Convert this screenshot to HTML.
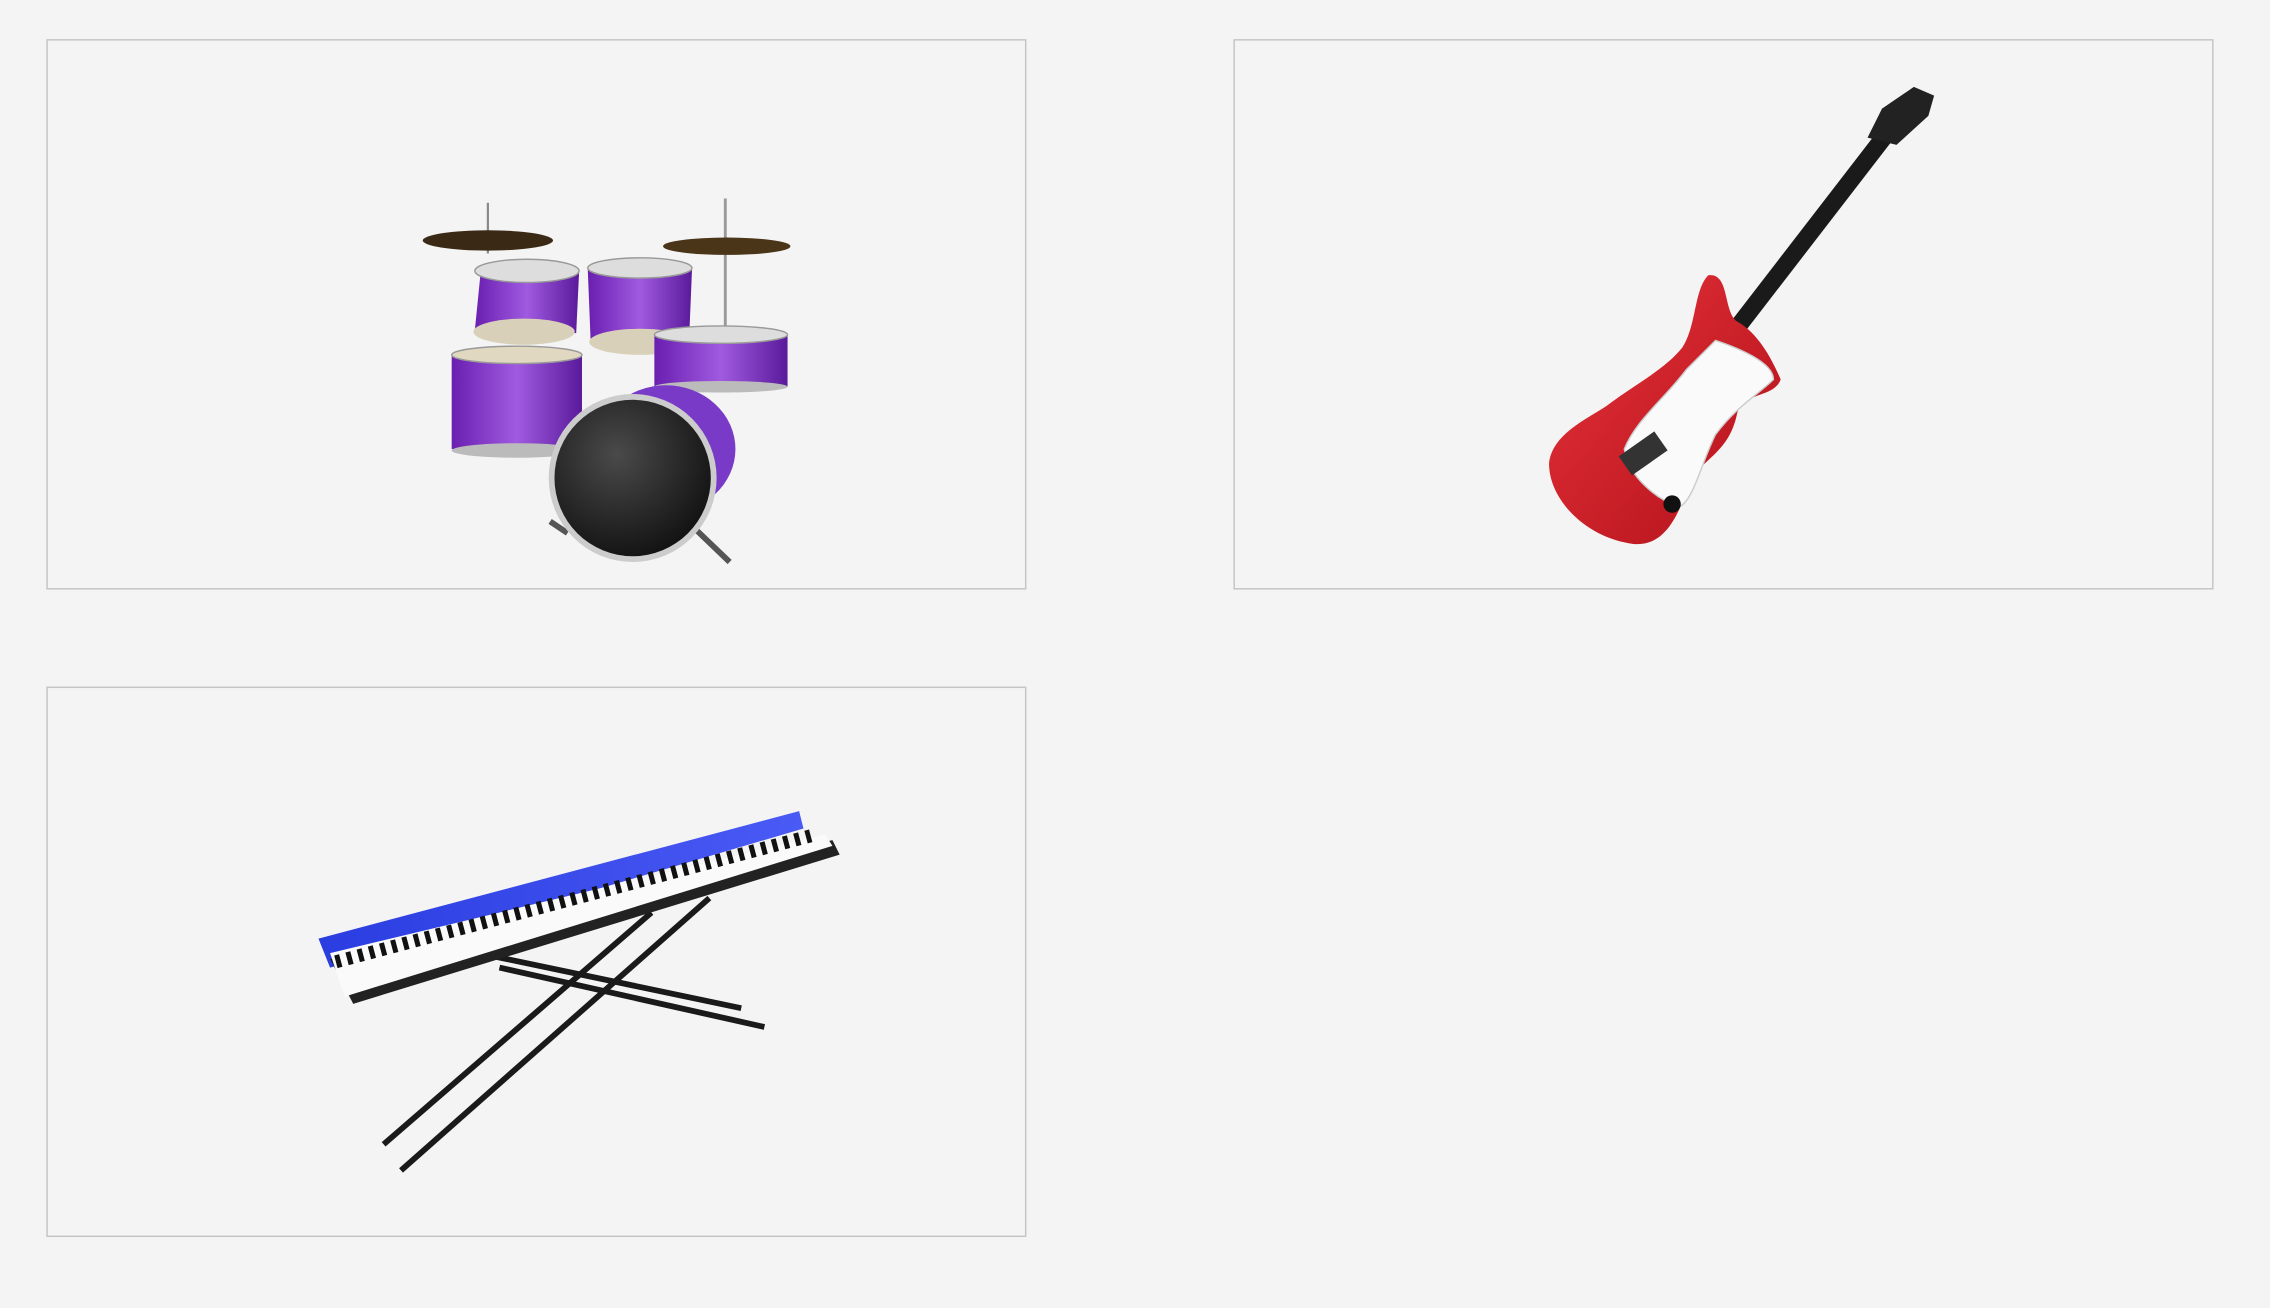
<!DOCTYPE html>
<html><head><meta charset="utf-8"><style>
html,body{margin:0;padding:0;background:#f4f4f4;}
svg{display:block;}
</style></head><body>
<svg width="2270" height="1308" viewBox="0 0 1568 903" preserveAspectRatio="none" xmlns="http://www.w3.org/2000/svg">
<defs>
<linearGradient id="pur" x1="0" x2="1"><stop offset="0" stop-color="#6a1fb0"/><stop offset="0.5" stop-color="#a05ae0"/><stop offset="1" stop-color="#5a1a9a"/></linearGradient>
<radialGradient id="bass" cx="0.4" cy="0.35" r="0.7"><stop offset="0" stop-color="#4a4a4a"/><stop offset="1" stop-color="#111"/></radialGradient>
<linearGradient id="red" x1="0" y1="0" x2="1" y2="1"><stop offset="0" stop-color="#e8333a"/><stop offset="1" stop-color="#b0101a"/></linearGradient>
<linearGradient id="blue" x1="0" x2="1"><stop offset="0" stop-color="#2a3de0"/><stop offset="1" stop-color="#4a5af5"/></linearGradient>
</defs>
<rect width="1568" height="903" fill="#f4f4f4"/>
<rect x="32.5" y="27.5" width="676" height="379" fill="#f4f4f4" stroke="#c4c4c4"/>
<rect x="852.5" y="27.5" width="676" height="379" fill="#f4f4f4" stroke="#c4c4c4"/>
<rect x="32.5" y="474.5" width="676" height="379" fill="#f4f4f4" stroke="#c4c4c4"/>

<!-- drums -->
<g>
<line x1="337" y1="140" x2="337" y2="175" stroke="#888" stroke-width="1.5"/>
<line x1="501" y1="137" x2="501" y2="230" stroke="#999" stroke-width="2"/>
<ellipse cx="337" cy="166" rx="45" ry="7" fill="#3a2a15"/>
<ellipse cx="502" cy="170" rx="44" ry="6" fill="#4a3518"/>
<line x1="380" y1="360" x2="392" y2="368" stroke="#555" stroke-width="4"/>
<line x1="480" y1="365" x2="504" y2="388" stroke="#555" stroke-width="4"/>
<path d="M332 188 L400 188 L398 230 L328 228 Z" fill="url(#pur)"/>
<ellipse cx="364" cy="187" rx="36" ry="8" fill="#ddd" stroke="#999"/>
<ellipse cx="362" cy="229" rx="35" ry="9" fill="#d8d0b8"/>
<path d="M406 186 L478 186 L476 234 L408 236 Z" fill="url(#pur)"/>
<ellipse cx="442" cy="185" rx="36" ry="7" fill="#ddd" stroke="#999"/>
<ellipse cx="442" cy="236" rx="35" ry="9" fill="#d8d0b8"/>
<rect x="452" y="231" width="92" height="36" fill="url(#pur)"/>
<ellipse cx="498" cy="231" rx="46" ry="6" fill="#ddd" stroke="#999"/>
<ellipse cx="498" cy="267" rx="46" ry="4" fill="#bbb"/>
<rect x="312" y="246" width="90" height="64" fill="url(#pur)"/>
<ellipse cx="357" cy="245" rx="45" ry="6" fill="#e0d8c0" stroke="#999"/>
<ellipse cx="357" cy="311" rx="45" ry="5" fill="#bbb"/>
<ellipse cx="460" cy="310" rx="48" ry="44" fill="#7a3ac8"/>
<circle cx="437" cy="330" r="58" fill="#ccc"/>
<circle cx="437" cy="330" r="54" fill="url(#bass)"/>
</g>

<!-- guitar -->
<g>
<line x1="1180" y1="252" x2="1305" y2="90" stroke="#1a1a1a" stroke-width="12" stroke-linecap="round"/>
<path d="M1290 95 L1300 75 L1322 60 L1336 66 L1332 80 L1310 100 Z" fill="#222"/>
<path d="M1180 190 C1195 188 1190 215 1200 222 C1215 230 1225 250 1230 262 C1225 275 1205 270 1200 285 C1195 310 1180 315 1168 330 C1160 355 1150 380 1125 375 C1095 370 1070 345 1070 320 C1072 300 1095 290 1110 280 C1130 265 1150 255 1162 240 C1172 225 1170 200 1180 190 Z" fill="url(#red)"/>
<path d="M1185 235 C1200 240 1225 250 1225 262 C1215 272 1200 280 1185 300 C1175 320 1170 345 1160 350 C1145 345 1125 330 1122 310 C1130 290 1150 275 1165 255 Z" fill="#fafafa" stroke="#ccc"/>
<rect x="1120" y="305" width="30" height="16" fill="#333" transform="rotate(-35 1135 313)"/>
<circle cx="1155" cy="348" r="6" fill="#111"/>
</g>

<!-- keyboard -->
<g>
<line x1="265" y1="790" x2="450" y2="630" stroke="#1a1a1a" stroke-width="4"/>
<line x1="277" y1="808" x2="490" y2="620" stroke="#1a1a1a" stroke-width="4"/>
<line x1="340" y1="660" x2="512" y2="696" stroke="#1a1a1a" stroke-width="4"/>
<line x1="345" y1="668" x2="528" y2="709" stroke="#1a1a1a" stroke-width="4"/>
<path d="M220 648 L552 560 L555 572 L228 668 Z" fill="url(#blue)"/>
<path d="M228 662 L575 580 L580 590 L244 693 Z" fill="#222"/>
<path d="M228 658 L570 576 L575 584 L238 688 Z" fill="#fafafa"/>
<line x1="232" y1="664" x2="560" y2="577" stroke="#111" stroke-width="9" stroke-dasharray="3.5 4.5"/>
</g>
</svg>
</body></html>
